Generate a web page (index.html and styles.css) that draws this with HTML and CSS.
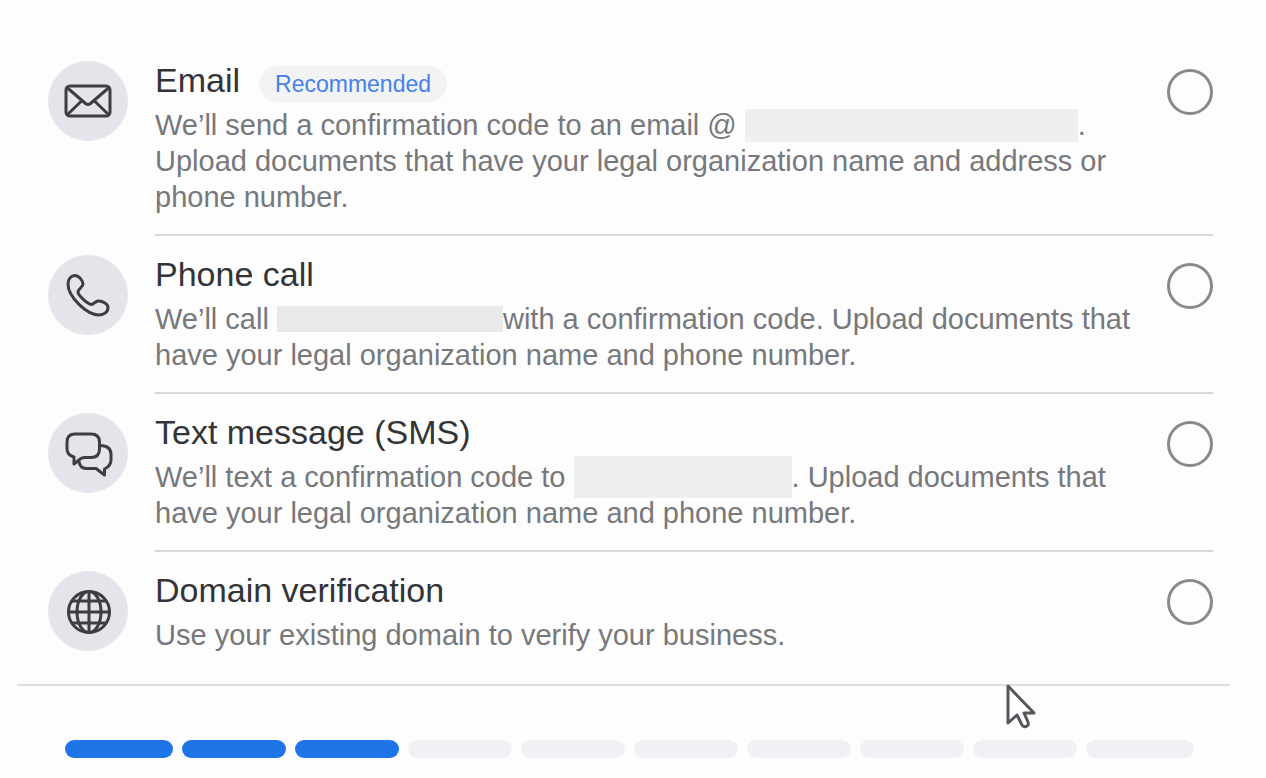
FILE: index.html
```
<!DOCTYPE html>
<html lang="en">
<head>
  <meta charset="UTF-8">
  <meta name="viewport" content="width=device-width, initial-scale=1.0">
  <title>Verify your business</title>
  <link rel="stylesheet" href="styles.css">
</head>
<body>
  <form class="panel">
    <div class="options">
      <div class="option">
        <div class="icon">
          <svg viewBox="0 0 80 80" aria-hidden="true">
            <rect x="18" y="25" width="44" height="30" rx="4"/>
            <path d="M19.500 27l18 15.500q2.500 2 5 0l18-15.500M19.500 53.500l14.500-14M60.500 53.500L46 39.500"/>
          </svg>
        </div>
        <div class="content">
          <div class="text">
            <div class="title">
              <label for="email">Email</label>
              <span class="badge">Recommended</span>
            </div>
            <p>We’ll send a confirmation code to an email @<span class="hidden-email"></span>. Upload documents that have your legal organization name and address or phone number.</p>
          </div>
          <input type="radio" id="email" name="method">
        </div>
      </div>

      <div class="option">
        <div class="icon">
          <svg viewBox="0 0 80 80" aria-hidden="true">
            <path d="M20 29C20 24 23 20.500 27 20.500S35 26 35 29 30 34 30 37C30 40 39 49 43.500 49.500 46 49.500 47 46 50.500 46 55 46 60 49 60 52.500 60 57 56 60 51 60 39 60 20 42 20 29z"/>
          </svg>
        </div>
        <div class="content">
          <div class="text">
            <div class="title">
              <label for="phone">Phone call</label>
            </div>
            <p>We’ll call <span class="hidden-phone"></span>with a confirmation code. Upload documents that have your legal organization name and phone number.</p>
          </div>
          <input type="radio" id="phone" name="method">
        </div>
      </div>

      <div class="option">
        <div class="icon">
          <svg viewBox="0 0 80 80" aria-hidden="true">
            <path d="M27 21h16q8.500 0 8.500 8v7q0 8.500-8.500 8.500h-6q-4 0-6.500 3l-4.500 3.500v-7q-7-2-7-8v-7q0-8 8-8z"/>
            <path d="M52 32.500q11 0 11 9V47q0 6-6.500 9v6L48 55.500H38q-6 0-7-7"/>
          </svg>
        </div>
        <div class="content">
          <div class="text">
            <div class="title">
              <label for="sms">Text message (SMS)</label>
            </div>
            <p>We’ll text a confirmation code to <span class="hidden-sms"></span>. Upload documents that have your legal organization name and phone number.</p>
          </div>
          <input type="radio" id="sms" name="method">
        </div>
      </div>

      <div class="option">
        <div class="icon">
          <svg viewBox="0 0 80 80" aria-hidden="true">
            <circle cx="41" cy="41" r="20.500"/>
            <ellipse cx="41" cy="41" rx="12" ry="20.500"/>
            <path d="M41 20.500v41M20.500 41h41M24 30h34M24 52h34"/>
          </svg>
        </div>
        <div class="content">
          <div class="text">
            <div class="title">
              <label for="domain">Domain verification</label>
            </div>
            <p>Use your existing domain to verify your business.</p>
          </div>
          <input type="radio" id="domain" name="method">
        </div>
      </div>
    </div>

    <div class="steps">
      <span class="step done"></span>
      <span class="step done"></span>
      <span class="step done"></span>
      <span class="step"></span>
      <span class="step"></span>
      <span class="step"></span>
      <span class="step"></span>
      <span class="step"></span>
      <span class="step"></span>
      <span class="step"></span>
    </div>
  </form>

  <svg class="cursor" viewBox="0 0 30 46" aria-hidden="true">
    <path d="M2 2v37l9-8 5 10q2 3 5 1 2-1 1-4l-4-9h10z"/>
  </svg>
</body>
</html>
```
FILE: styles.css
```
body {
  margin: 0;
  background: #fdfdfd;
  font-family: "Liberation Sans", Arial, sans-serif;
  color: #333437;
}
.panel {
  margin: 0 36px 0 17px;
  padding-top: 42px;
}
.options {
  padding: 0 17px 12px 31px;
  border-bottom: 2px solid #dedede;
}
.option {
  display: flex;
  align-items: flex-start;
  gap: 27px;
}
.icon {
  flex: none;
  width: 80px;
  height: 80px;
  margin-top: 19px;
  border-radius: 50%;
  background: #e5e4ea;
}
.icon svg {
  display: block;
  fill: none;
  stroke: #3d3d42;
  stroke-width: 3;
  stroke-linejoin: round;
}
.content {
  flex: 1;
  display: flex;
  align-items: flex-start;
  gap: 20px;
  padding: 18px 0 19px;
  border-bottom: 2px solid #d8d8da;
}
.option:last-child .content {
  border-bottom: none;
}
.text {
  flex: 1;
}
.title {
  display: flex;
  align-items: center;
  gap: 19px;
  height: 40px;
  font-size: 34px;
}
.badge {
  padding: 0 16px;
  margin-top: 8px;
  border-radius: 18px;
  background: #f1f3f5;
  color: #4680e8;
  font-size: 23px;
  line-height: 36px;
}
p {
  margin: 7px 0 0;
  font-size: 29px;
  line-height: 36px;
  color: #77787b;
}
.hidden-email,
.hidden-phone,
.hidden-sms {
  display: inline-block;
  margin: -12px 0 -8px;
  vertical-align: middle;
  background: #efeff0;
}
.hidden-email {
  width: 333px;
  height: 33px;
  margin-left: 8px;
}
.hidden-phone {
  width: 226px;
  height: 26px;
  background: #e9e9ea;
}
.hidden-sms {
  width: 218px;
  height: 42px;
}
input[type="radio"] {
  appearance: none;
  flex: none;
  width: 46px;
  height: 46px;
  margin: 9px 0 0;
  border: 3px solid #89898c;
  border-radius: 50%;
}
input[type="radio"]:checked {
  border: 14px solid #1f74e8;
}
.steps {
  display: flex;
  gap: 9px;
  padding: 54px 36px 20px 48px;
}
.step {
  flex: 1;
  height: 18px;
  border-radius: 9px;
  background: #f0f1f5;
}
.step:first-child,
.step:last-child {
  flex-basis: 4px;
}
.step.done {
  background: #1f74e8;
}
.cursor {
  position: absolute;
  left: 1006px;
  top: 684px;
  width: 30px;
  height: 46px;
  fill: #fff;
  stroke: #55555c;
  stroke-width: 3;
  stroke-linejoin: round;
}
```
